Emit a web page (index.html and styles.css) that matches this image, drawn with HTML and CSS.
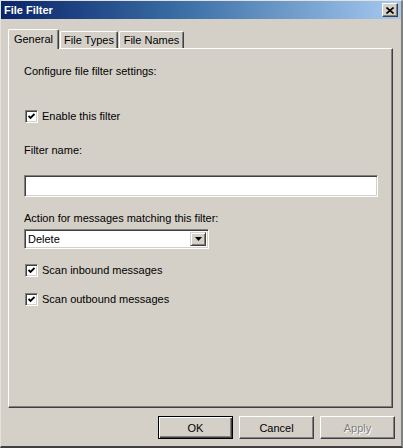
FILE: index.html
```html
<!DOCTYPE html>
<html lang="en">
<head>
  <meta charset="UTF-8">
  <title>File Filter</title>
  <link rel="stylesheet" href="styles.css">
</head>
<body>
  <div class="window">
    <div class="titlebar">
      <span class="title">File Filter</span>
      <span class="close-btn">
        <svg width="8" height="7" viewBox="0 0 8 7"><path d="M0.5 0.5 L7.5 6.5 M7.5 0.5 L0.5 6.5" stroke="#000" stroke-width="1.6" fill="none"/></svg>
      </span>
    </div>

    <div class="tabs">
      <div class="tab active tab-general">General</div>
      <div class="tab tab-types">File Types</div>
      <div class="tab tab-names">File Names</div>
    </div>

    <div class="panel">
      <div class="label intro">Configure file filter settings:</div>

      <div class="check enable">
        <span class="box"><svg width="7" height="7" viewBox="0 0 7 7"><path d="M0.5 3 L2.5 5 L6.5 1" stroke="#000" stroke-width="1.8" fill="none"/></svg></span>
        Enable this filter
      </div>

      <div class="label name-label">Filter name:</div>
      <div class="textbox"></div>

      <div class="label action-label">Action for messages matching this filter:</div>
      <div class="select">
        <span class="select-value">Delete</span>
        <span class="select-arrow"><svg width="7" height="4" viewBox="0 0 7 4"><path d="M0 0 H7 L3.5 4 Z" fill="#000"/></svg></span>
      </div>

      <div class="check inbound">
        <span class="box"><svg width="7" height="7" viewBox="0 0 7 7"><path d="M0.5 3 L2.5 5 L6.5 1" stroke="#000" stroke-width="1.8" fill="none"/></svg></span>
        Scan inbound messages
      </div>
      <div class="check outbound">
        <span class="box"><svg width="7" height="7" viewBox="0 0 7 7"><path d="M0.5 3 L2.5 5 L6.5 1" stroke="#000" stroke-width="1.8" fill="none"/></svg></span>
        Scan outbound messages
      </div>
    </div>

    <div class="footer">
      <button class="btn default">OK</button>
      <button class="btn">Cancel</button>
      <button class="btn" disabled>Apply</button>
    </div>
  </div>
</body>
</html>
```

FILE: styles.css
```css
html, body {
  margin: 0;
  padding: 0;
  background: #d4d0c8;
}
body {
  font-family: "Liberation Sans", Arial, sans-serif;
  font-size: 11px;
  color: #000;
}
.window {
  box-sizing: border-box;
  width: 403px;
  height: 448px;
  background: #d4d0c8;
  border-top: 1px solid #e4e2dc;
  border-left: 1px solid #e4e2dc;
  border-right: 2px solid #808080;
  border-bottom: 2px solid #404040;
  display: flex;
  flex-direction: column;
}
.titlebar {
  height: 18px;
  display: flex;
  align-items: center;
  justify-content: space-between;
  padding: 0 3px 0 3px;
  background: linear-gradient(to right, #0a246a 0%, #3a6ea5 45%, #a6caf0 100%);
}
.title {
  color: #fff;
  font-weight: bold;
  font-size: 11px;
}
.close-btn {
  box-sizing: border-box;
  width: 16px;
  height: 14px;
  display: flex;
  align-items: center;
  justify-content: center;
  background: #d4d0c8;
  border-top: 1px solid #fff;
  border-left: 1px solid #fff;
  border-right: 1px solid #404040;
  border-bottom: 1px solid #404040;
  box-shadow: inset -1px -1px #808080;
}

/* tabs */
.tabs {
  display: flex;
  align-items: flex-end;
  margin: 10px 0 0 7px;
  height: 19px;
  position: relative;
  z-index: 1;
}
.tab {
  box-sizing: border-box;
  height: 17px;
  line-height: 16px;
  text-align: center;
  background: #d4d0c8;
  border-top: 1px solid #fff;
  border-left: 1px solid #fff;
  border-right: 1px solid #404040;
  box-shadow: inset -1px 0 #808080;
  border-radius: 2px 2px 0 0;
}
.tab.active {
  height: 20px;
  line-height: 18px;
  margin-bottom: -1px;
}
.tab + .tab {
  margin-left: 1px;
}
.tab-general {
  width: 51px;
}
.tab-types {
  width: 58px;
}
.tab-names {
  width: 65px;
}

/* panel */
.panel {
  box-sizing: border-box;
  width: 385px;
  height: 360px;
  margin-left: 7px;
  padding: 15px 14px 0 15px;
  border-top: 1px solid #fff;
  border-left: 1px solid #fff;
  border-right: 1px solid #404040;
  border-bottom: 1px solid #404040;
  box-shadow: inset -1px -1px #808080;
  display: flex;
  flex-direction: column;
}
.label {
  line-height: 14px;
}
.name-label {
  margin-top: 20px;
}
.action-label {
  margin-top: 14px;
}
.check {
  display: flex;
  align-items: center;
  gap: 4px;
  height: 13px;
  line-height: 13px;
  padding-left: 1px;
}
.check.enable {
  margin-top: 32px;
}
.check.inbound {
  margin-top: 15px;
}
.check.outbound {
  margin-top: 16px;
}
.box {
  box-sizing: border-box;
  width: 13px;
  height: 13px;
  display: flex;
  align-items: center;
  justify-content: center;
  background: #fff;
  border-top: 1px solid #808080;
  border-left: 1px solid #808080;
  border-right: 1px solid #fff;
  border-bottom: 1px solid #fff;
  box-shadow: inset 1px 1px #404040, inset -1px -1px #d4d0c8;
}
.textbox {
  box-sizing: border-box;
  width: 354px;
  height: 22px;
  margin-top: 18px;
  background: #fff;
  border-top: 1px solid #808080;
  border-left: 1px solid #808080;
  border-right: 1px solid #fff;
  border-bottom: 1px solid #fff;
  box-shadow: inset 1px 1px #404040, inset -1px -1px #d4d0c8;
}
.select {
  box-sizing: border-box;
  width: 185px;
  height: 20px;
  margin-top: 4px;
  display: flex;
  align-items: stretch;
  background: #fff;
  border-top: 1px solid #808080;
  border-left: 1px solid #808080;
  border-right: 1px solid #fff;
  border-bottom: 1px solid #fff;
  box-shadow: inset 1px 1px #404040, inset -1px -1px #d4d0c8;
  padding: 2px;
}
.select-value {
  flex: 1;
  line-height: 14px;
  padding-left: 1px;
}
.select-arrow {
  box-sizing: border-box;
  width: 16px;
  display: flex;
  align-items: center;
  justify-content: center;
  background: #d4d0c8;
  border-top: 1px solid #d4d0c8;
  border-left: 1px solid #d4d0c8;
  border-right: 1px solid #404040;
  border-bottom: 1px solid #404040;
  box-shadow: inset 1px 1px #fff, inset -1px -1px #808080;
}

/* buttons */
.footer {
  display: flex;
  justify-content: flex-end;
  gap: 6px;
  margin-top: 8px;
  padding-right: 6px;
}
.btn {
  box-sizing: border-box;
  width: 75px;
  height: 23px;
  padding: 0;
  font-family: inherit;
  font-size: 11px;
  color: #000;
  background: #d4d0c8;
  border-top: 1px solid #fff;
  border-left: 1px solid #fff;
  border-right: 1px solid #404040;
  border-bottom: 1px solid #404040;
  box-shadow: inset -1px -1px #808080;
}
.btn.default {
  border: 1px solid #000;
  box-shadow: inset 1px 1px #fff, inset -1px -1px #404040, inset -2px -2px #808080;
}
.btn:disabled {
  color: #808080;
  text-shadow: 1px 1px #fff;
}
```
